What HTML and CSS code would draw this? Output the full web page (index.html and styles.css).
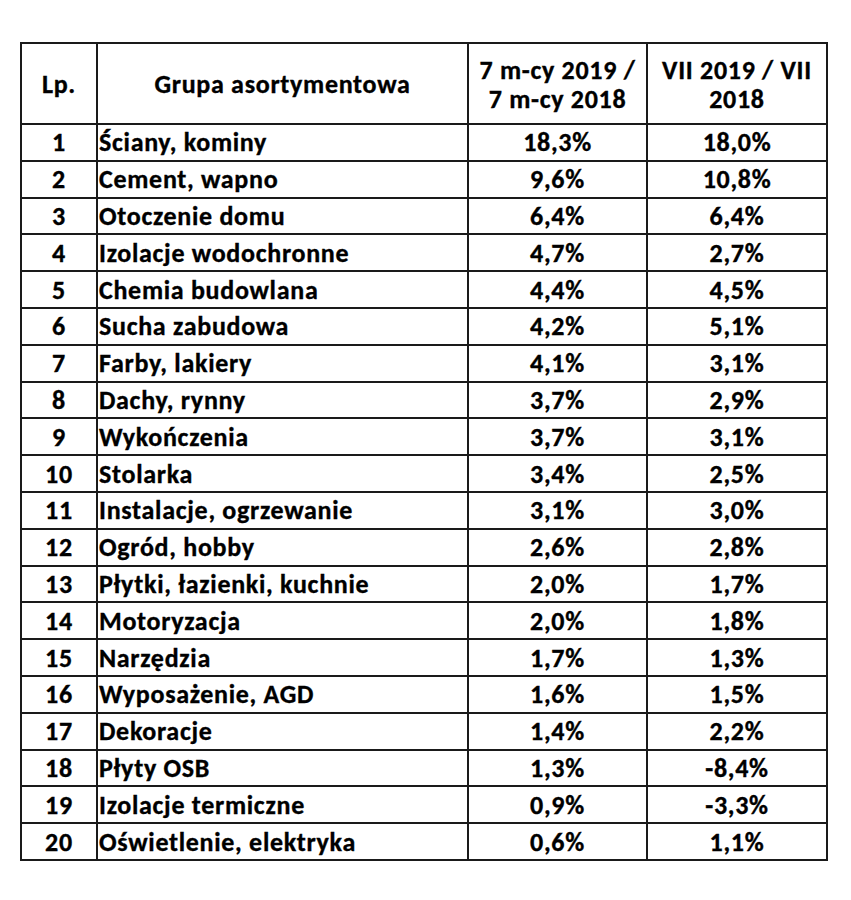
FILE: index.html
```html
<!DOCTYPE html>
<html lang="pl">
<head>
<meta charset="utf-8">
<title>Tabela</title>
<link rel="stylesheet" href="styles.css">
</head>
<body>
<table class="sales">
  <colgroup>
    <col class="c-lp">
    <col class="c-name">
    <col class="c-a">
    <col class="c-b">
  </colgroup>
  <thead>
    <tr class="head">
      <th>Lp.</th>
      <th>Grupa asortymentowa</th>
      <th>7 m-cy 2019 /<br>7 m-cy 2018</th>
      <th>VII 2019 / VII<br>2018</th>
    </tr>
  </thead>
  <tbody>
    <tr><td>1</td><td class="name">Ściany, kominy</td><td>18,3%</td><td>18,0%</td></tr>
    <tr><td>2</td><td class="name">Cement, wapno</td><td>9,6%</td><td>10,8%</td></tr>
    <tr><td>3</td><td class="name">Otoczenie domu</td><td>6,4%</td><td>6,4%</td></tr>
    <tr><td>4</td><td class="name">Izolacje wodochronne</td><td>4,7%</td><td>2,7%</td></tr>
    <tr><td>5</td><td class="name">Chemia budowlana</td><td>4,4%</td><td>4,5%</td></tr>
    <tr><td>6</td><td class="name">Sucha zabudowa</td><td>4,2%</td><td>5,1%</td></tr>
    <tr><td>7</td><td class="name">Farby, lakiery</td><td>4,1%</td><td>3,1%</td></tr>
    <tr><td>8</td><td class="name">Dachy, rynny</td><td>3,7%</td><td>2,9%</td></tr>
    <tr><td>9</td><td class="name">Wykończenia</td><td>3,7%</td><td>3,1%</td></tr>
    <tr><td>10</td><td class="name">Stolarka</td><td>3,4%</td><td>2,5%</td></tr>
    <tr><td>11</td><td class="name">Instalacje, ogrzewanie</td><td>3,1%</td><td>3,0%</td></tr>
    <tr><td>12</td><td class="name">Ogród, hobby</td><td>2,6%</td><td>2,8%</td></tr>
    <tr><td>13</td><td class="name">Płytki, łazienki, kuchnie</td><td>2,0%</td><td>1,7%</td></tr>
    <tr><td>14</td><td class="name">Motoryzacja</td><td>2,0%</td><td>1,8%</td></tr>
    <tr><td>15</td><td class="name">Narzędzia</td><td>1,7%</td><td>1,3%</td></tr>
    <tr><td>16</td><td class="name">Wyposażenie, AGD</td><td>1,6%</td><td>1,5%</td></tr>
    <tr><td>17</td><td class="name">Dekoracje</td><td>1,4%</td><td>2,2%</td></tr>
    <tr><td>18</td><td class="name">Płyty OSB</td><td>1,3%</td><td>-8,4%</td></tr>
    <tr><td>19</td><td class="name">Izolacje termiczne</td><td>0,9%</td><td>-3,3%</td></tr>
    <tr><td>20</td><td class="name">Oświetlenie, elektryka</td><td>0,6%</td><td>1,1%</td></tr>
  </tbody>
</table>
</body>
</html>
```
FILE: styles.css
```css
html, body {
  margin: 0;
  padding: 0;
  background: #ffffff;
}
body {
  padding: 42px 0 0 20px;
  font-family: Carlito, Calibri, "Liberation Sans", sans-serif;
  color: #000;
}
.sales {
  border-collapse: collapse;
  table-layout: fixed;
  width: 806px;
  border: 2px solid #111;
}
.c-lp { width: 76px; }
.c-name { width: 371px; }
.c-a { width: 179px; }
.c-b { width: 180px; }
.sales th,
.sales td {
  border: 2px solid #1a1a1a;
  padding: 0 2px;
  font-size: 26px;
  font-weight: 700;
  letter-spacing: 0.7px;
  -webkit-text-stroke: 0.35px #000;
  line-height: 28px;
  text-align: center;
  vertical-align: middle;
  white-space: nowrap;
}
.sales .head th {
  height: 77px;
  line-height: 29px;
  padding-top: 2px;
}
.sales tbody tr {
  height: 36.8px;
}
.sales td.name {
  text-align: left;
  padding-left: 1px;
}
```
